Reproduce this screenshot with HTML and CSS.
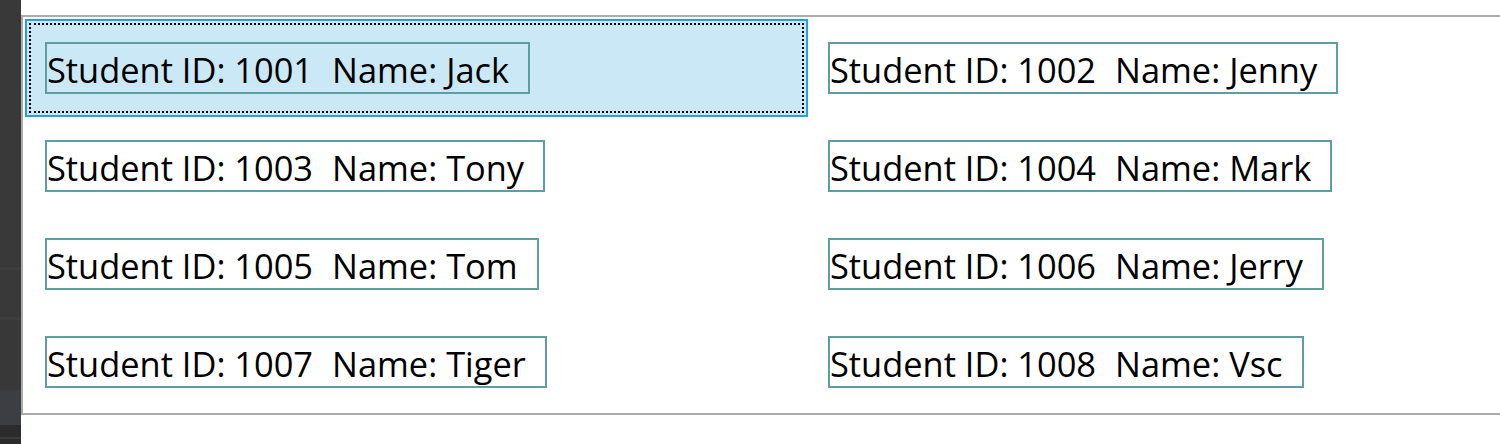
FILE: index.html
```html
<!DOCTYPE html>
<html lang="en">
<head>
<meta charset="utf-8">
<title>Students</title>
<link rel="stylesheet" href="styles.css">
</head>
<body>
<div class="page">
  <div class="side-strip"></div>
  <div class="main">
    <div class="listbox">
      <div class="grid">
        <div class="item selected"><div class="focus"><div class="card"><span class="f">Student ID: 1001</span><span class="f">Name: Jack</span></div></div></div>
        <div class="item"><div class="focus"><div class="card"><span class="f">Student ID: 1002</span><span class="f">Name: Jenny</span></div></div></div>
        <div class="item"><div class="focus"><div class="card"><span class="f">Student ID: 1003</span><span class="f">Name: Tony</span></div></div></div>
        <div class="item"><div class="focus"><div class="card"><span class="f">Student ID: 1004</span><span class="f">Name: Mark</span></div></div></div>
        <div class="item"><div class="focus"><div class="card"><span class="f">Student ID: 1005</span><span class="f">Name: Tom</span></div></div></div>
        <div class="item"><div class="focus"><div class="card"><span class="f">Student ID: 1006</span><span class="f">Name: Jerry</span></div></div></div>
        <div class="item"><div class="focus"><div class="card"><span class="f">Student ID: 1007</span><span class="f">Name: Tiger</span></div></div></div>
        <div class="item"><div class="focus"><div class="card"><span class="f">Student ID: 1008</span><span class="f">Name: Vsc</span></div></div></div>
      </div>
    </div>
  </div>
</div>
</body>
</html>
```
FILE: styles.css
```css
html, body {
  margin: 0;
  padding: 0;
  background: #ffffff;
  overflow: hidden;
}
.page {
  display: flex;
  width: 1500px;
  height: 444px;
}
.side-strip {
  width: 21px;
  flex: none;
  background: linear-gradient(to bottom,
    #393939 0, #393939 267px,
    #3e3e3e 267px, #3e3e3e 270px,
    #393939 270px, #393939 317px,
    #3d3d3d 317px, #3d3d3d 320px,
    #383838 320px, #383838 390px,
    #3d3d44 390px, #3d3d44 425px,
    #2b2b2b 425px, #2b2b2b 437px,
    #3a3a3a 437px, #3a3a3a 439px,
    #2b2b2b 439px);
}
.main {
  flex: 1;
  min-width: 0;
  padding-top: 15px;
}
.listbox {
  height: 394px;
  border-top: 2px solid #ababab;
  border-bottom: 2px solid #ababab;
  border-left: 2px solid #ababab;
  background: #ffffff;
  overflow: hidden;
  padding: 2px 0 0 2px;
  box-sizing: content-box;
}
.grid {
  display: grid;
  grid-template-columns: 783px 783px;
  grid-auto-rows: 98px;
}
.item {
  border: 2px solid transparent;
  padding: 2px;
  box-sizing: border-box;
}
.item.selected {
  background: #cbe8f6;
  border-color: #26a0da;
}
.focus {
  height: 100%;
  box-sizing: border-box;
  border: 2px solid transparent;
  padding: 17px 0 0 14px;
}
.item.selected .focus {
  border: 2px dotted #000000;
}
.card {
  display: inline-flex;
  height: 52px;
  box-sizing: border-box;
  border: 2px solid #5f9ea0;
  padding: 3px 0 0 0;
  font-family: "Open Sans", "Noto Sans", sans-serif;
  font-size: 34.4px;
  line-height: 45px;
  color: #000000;
  white-space: nowrap;
}
.f {
  margin-right: 19px;
}
```
